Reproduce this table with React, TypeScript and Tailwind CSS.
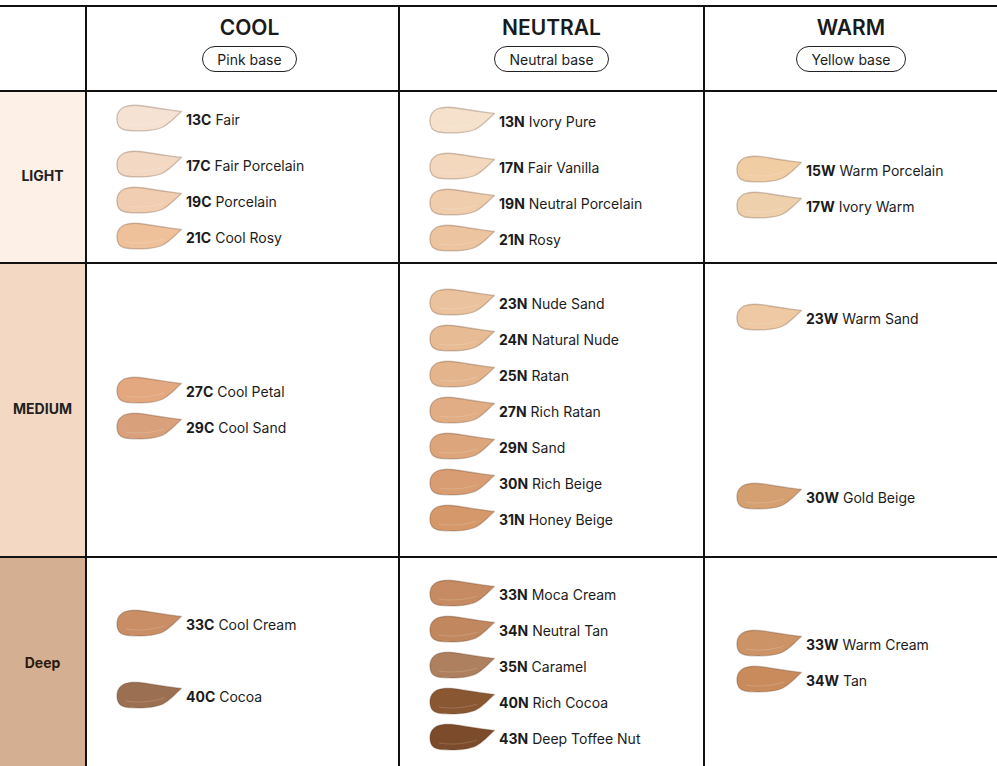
import React from "react";

type Shade = { code: string; name: string; color: string; gap?: number };
type Cell = { pt: number; pl: number; shades: Shade[] };
type Row = { label: string; bg: string; text: string; height: string; cells: Cell[] };

const tones = [
  { title: "COOL", base: "Pink base" },
  { title: "NEUTRAL", base: "Neutral base" },
  { title: "WARM", base: "Yellow base" },
];

const rows: Row[] = [
  {
    label: "LIGHT",
    bg: "bg-[#fdf0e7]",
    text: "text-[#222]",
    height: "h-[172px]",
    cells: [
      {
        pt: 9,
        pl: 29,
        shades: [
          { code: "13C", name: "Fair", color: "#f6e2d3" },
          { code: "17C", name: "Fair Porcelain", color: "#f3d8c3", gap: 10 },
          { code: "19C", name: "Porcelain", color: "#f1cdb1" },
          { code: "21C", name: "Cool Rosy", color: "#eec19b" },
        ],
      },
      {
        pt: 11,
        pl: 29,
        shades: [
          { code: "13N", name: "Ivory Pure", color: "#f5e1cc" },
          { code: "17N", name: "Fair Vanilla", color: "#f3d8bd", gap: 10 },
          { code: "19N", name: "Neutral Porcelain", color: "#efcdad" },
          { code: "21N", name: "Rosy", color: "#ecc4a0" },
        ],
      },
      {
        pt: 60,
        pl: 31,
        shades: [
          { code: "15W", name: "Warm Porcelain", color: "#f0cda3" },
          { code: "17W", name: "Ivory Warm", color: "#efd0ad" },
        ],
      },
    ],
  },
  {
    label: "MEDIUM",
    bg: "bg-[#f3d8c4]",
    text: "text-[#222]",
    height: "h-[294px]",
    cells: [
      {
        pt: 109,
        pl: 29,
        shades: [
          { code: "27C", name: "Cool Petal", color: "#e3a880" },
          { code: "29C", name: "Cool Sand", color: "#d9a07c" },
        ],
      },
      {
        pt: 21,
        pl: 29,
        shades: [
          { code: "23N", name: "Nude Sand", color: "#eac29d" },
          { code: "24N", name: "Natural Nude", color: "#e7bb94" },
          { code: "25N", name: "Ratan", color: "#e4b58c" },
          { code: "27N", name: "Rich Ratan", color: "#e1ad84" },
          { code: "29N", name: "Sand", color: "#dca57b" },
          { code: "30N", name: "Rich Beige", color: "#d89d72" },
          { code: "31N", name: "Honey Beige", color: "#d5986a" },
        ],
      },
      {
        pt: 36,
        pl: 31,
        shades: [
          { code: "23W", name: "Warm Sand", color: "#eec9a3" },
          { code: "30W", name: "Gold Beige", color: "#d4a072", gap: 143 },
        ],
      },
    ],
  },
  {
    label: "Deep",
    bg: "bg-[#d4af91]",
    text: "text-[#2a1a10]",
    height: "h-[212px]",
    cells: [
      {
        pt: 48,
        pl: 29,
        shades: [
          { code: "33C", name: "Cool Cream", color: "#c98e66" },
          { code: "40C", name: "Cocoa", color: "#9b7052", gap: 36 },
        ],
      },
      {
        pt: 18,
        pl: 29,
        shades: [
          { code: "33N", name: "Moca Cream", color: "#c68b62" },
          { code: "34N", name: "Neutral Tan", color: "#c1875f" },
          { code: "35N", name: "Caramel", color: "#ae805f" },
          { code: "40N", name: "Rich Cocoa", color: "#8a5733" },
          { code: "43N", name: "Deep Toffee Nut", color: "#7b4b2b" },
        ],
      },
      {
        pt: 68,
        pl: 31,
        shades: [
          { code: "33W", name: "Warm Cream", color: "#cc9367" },
          { code: "34W", name: "Tan", color: "#c98b5c" },
        ],
      },
    ],
  },
];

function Swatch({ color }: { color: string }) {
  return (
    <svg width="66" height="28" viewBox="0 0 66 28" className="mb-[2px] shrink-0">
      <path
        d="M8 3C14 0.5 24 1 34 3C45 5 56 6 65.5 7.5C60 12 54 19.5 46 23.5C36 27.5 19 27.5 9 26C2 24.5 0.5 19 1 13C1.5 8.5 4 5 8 3Z"
        fill={color}
        stroke="rgba(90,55,30,0.28)"
        strokeWidth="1.3"
      />
      <path
        d="M10 20C22 22 36 21 48 17"
        fill="none"
        stroke="rgba(255,255,255,0.16)"
        strokeWidth="1"
      />
    </svg>
  );
}

function ShadeCell({ cell, last }: { cell: Cell; last: boolean }) {
  return (
    <div
      className={`flex flex-col ${last ? "" : "border-r-2 border-[#111]"}`}
      style={{ paddingTop: cell.pt, paddingLeft: cell.pl }}
    >
      {cell.shades.map((s) => (
        <div
          key={s.code}
          className="flex h-9 items-center gap-1"
          style={{ marginTop: s.gap ?? 0 }}
        >
          <Swatch color={s.color} />
          <span className="whitespace-nowrap text-[14px] text-[#1c1c1c]">
            <span className="font-bold">{s.code}</span> {s.name}
          </span>
        </div>
      ))}
    </div>
  );
}

export default function App() {
  return (
    <div
      className="h-[766px] w-[997px] overflow-hidden bg-white pt-[5px]"
      style={{ fontFamily: "Inter, 'Noto Sans', sans-serif" }}
    >
      <div className="border-t-2 border-[#111]">
        {/* header */}
        <div className="grid h-[85px] grid-cols-[87px_313px_305px_292px] border-b-2 border-[#111]">
          <div className="border-r-2 border-[#111]" />
          {tones.map((t, i) => (
            <div
              key={t.title}
              className={`flex flex-col items-center pt-[9px] ${
                i === 0 ? "pl-[14px]" : ""
              } ${i < 2 ? "border-r-2 border-[#111]" : ""}`}
            >
              <span className="text-[21px] font-semibold leading-6 text-[#1a1a1a]">{t.title}</span>
              <span className="mt-[6px] flex h-[26px] items-center rounded-full border border-[#222] px-[14px] text-[14px] text-[#1c1c1c]">
                {t.base}
              </span>
            </div>
          ))}
        </div>

        {rows.map((r, ri) => (
          <div
            key={r.label}
            className={`grid grid-cols-[87px_313px_305px_292px] ${r.height} ${
              ri < rows.length - 1 ? "border-b-2 border-[#111]" : ""
            }`}
          >
            <div
              className={`flex items-center justify-center border-r-2 border-[#111] ${r.bg} pb-[4px] text-[14px] font-bold ${r.text}`}
            >
              {r.label}
            </div>
            {r.cells.map((c, ci) => (
              <ShadeCell key={ci} cell={c} last={ci === 2} />
            ))}
          </div>
        ))}
      </div>
    </div>
  );
}
